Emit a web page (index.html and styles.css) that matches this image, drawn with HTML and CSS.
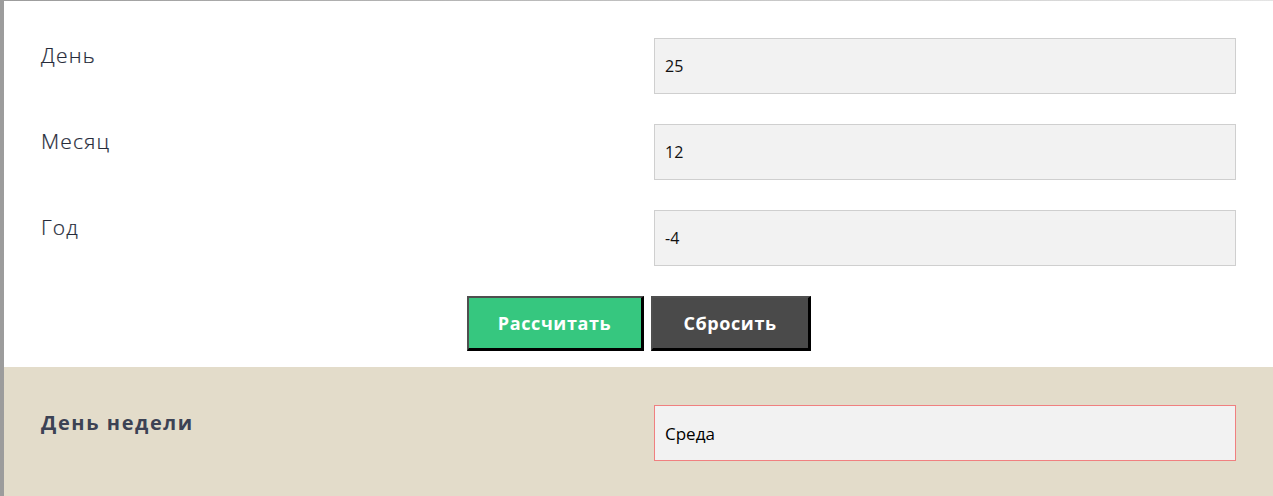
FILE: index.html
```html
<!DOCTYPE html>
<html lang="ru">
<head>
<meta charset="utf-8">
<title>День недели</title>
<link rel="stylesheet" href="styles.css">
</head>
<body>
<div class="frame">
  <form class="calc">
    <div class="row">
      <label class="label" for="d">День</label>
      <input class="field" id="d" type="text" value="25">
    </div>
    <div class="row">
      <label class="label" for="m">Месяц</label>
      <input class="field" id="m" type="text" value="12">
    </div>
    <div class="row">
      <label class="label" for="y">Год</label>
      <input class="field" id="y" type="text" value="-4">
    </div>
    <div class="actions">
      <button type="button" class="btn btn-go">Рассчитать</button>
      <button type="reset" class="btn btn-reset">Сбросить</button>
    </div>
  </form>
  <div class="result">
    <div class="row">
      <div class="label label-bold">День недели</div>
      <input class="field field-out" type="text" value="Среда" readonly>
    </div>
  </div>
</div>
</body>
</html>
```
FILE: styles.css
```css
html, body {
  margin: 0;
  padding: 0;
  height: 100%;
}
body {
  background: #fff;
  font-family: "Open Sans", "Liberation Sans", sans-serif;
  overflow: hidden;
}
.frame {
  height: 100%;
  border-style: solid;
  border-width: 1px 0 0 4px;
  border-image: linear-gradient(to right, #9c9c9c, #e4e4e4) 1;
  box-sizing: border-box;
}
.calc {
  padding: 37px 37px 16px 37px;
  display: flex;
  flex-direction: column;
  gap: 30px;
}
.row {
  display: grid;
  grid-template-columns: 1fr 1fr;
  column-gap: 31px;
  align-items: start;
}
.label {
  font-size: 21px;
  font-weight: 300;
  letter-spacing: 1.2px;
  line-height: 30px;
  color: #262b3a;
  -webkit-text-stroke: 0.2px #262b3a;
  padding-top: 2px;
}
.label-bold {
  font-weight: 700;
  font-size: 20px;
  letter-spacing: 1.6px;
  color: #3c4254;
  -webkit-text-stroke: 0;
  padding-top: 3px;
}
.field {
  box-sizing: border-box;
  height: 56px;
  width: 100%;
  margin: 0;
  border: 1px solid #cfcfcf;
  background: #f2f2f2;
  padding: 0 10px;
  font-family: "Open Sans", "Liberation Sans", sans-serif;
  font-size: 16px;
  color: #111;
  outline: none;
}
.field-out {
  border-color: #f08080;
  font-size: 17px;
  font-weight: 400;
  color: #000;
}
.actions {
  display: flex;
  justify-content: center;
  gap: 7px;
}
.btn {
  height: 55px;
  box-sizing: border-box;
  border-style: solid;
  border-width: 2px 3px 3px 2px;
  border-color: #4f4f4f #000 #000 #4f4f4f;
  color: #fff;
  font-family: "Open Sans", "Liberation Sans", sans-serif;
  font-weight: 700;
  font-size: 18px;
  letter-spacing: 0.6px;
  padding: 0;
  cursor: pointer;
}
.btn-go {
  width: 177px;
  background: #36c77f;
}
.btn-reset {
  width: 160px;
  background: #4a4a4a;
}
.result {
  background: #e3dcca;
  padding: 38px 37px 40px 37px;
}
```
